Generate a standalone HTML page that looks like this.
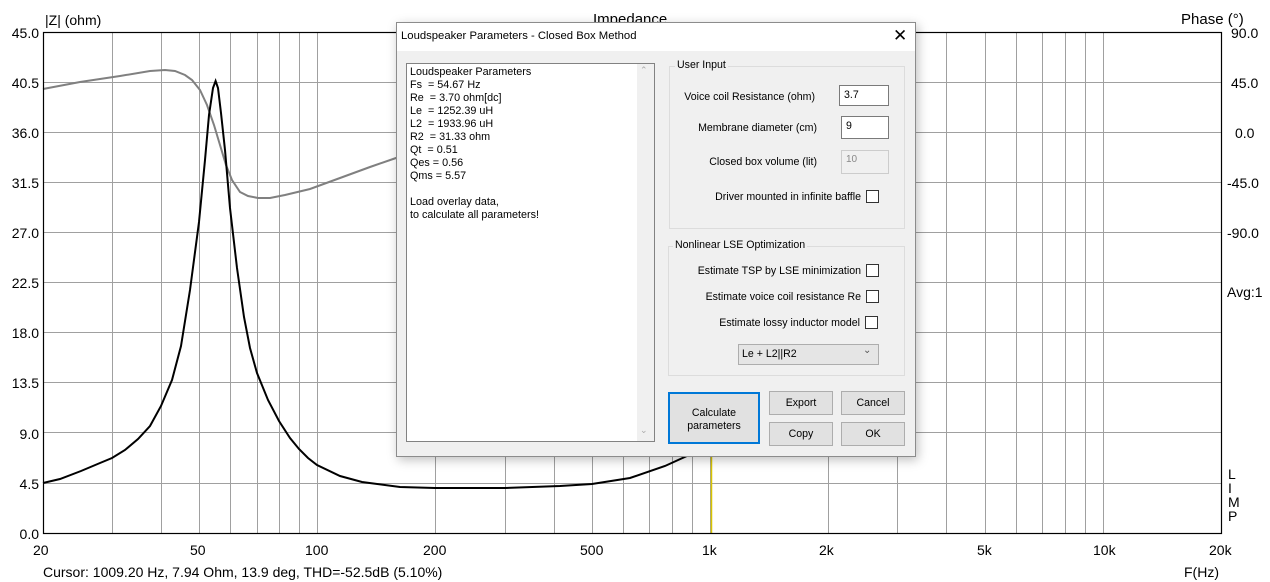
<!DOCTYPE html>
<html><head><meta charset="utf-8"><style>
*{margin:0;padding:0;box-sizing:border-box}
body{width:1270px;height:582px;background:#fff;position:relative;overflow:hidden;font-family:"Liberation Sans",Arial,sans-serif}
.a{position:absolute;font-size:14px;color:#000;white-space:nowrap;line-height:16px}
.dlg{position:absolute;left:396px;top:22px;width:520px;height:435px;background:#f0f0f0;border:1px solid #8c8c8c;box-shadow:2px 3px 10px rgba(0,0,0,.25);font-family:"Liberation Sans",sans-serif;font-size:10.6px}
.d{position:absolute;white-space:nowrap;font-size:10.6px}
.r{position:absolute;white-space:nowrap;font-size:10.6px;text-align:right}
.tb{position:absolute;left:0;top:0;width:518px;height:28px;background:#fff}
.inp{position:absolute;background:#fff;border:1px solid #7a7a7a;padding:3px 0 0 4px}
.cb{position:absolute;width:13px;height:13px;border:1px solid #333;background:#fff}
.grp{position:absolute;border:1px solid #dcdcdc}
.btn{position:absolute;background:#e1e1e1;border:1px solid #adadad;text-align:center}
</style></head><body>
<svg width="1270" height="582" style="position:absolute;left:0;top:0">
<g stroke="#a0a0a0" stroke-width="1">
<line x1="43" x2="1221" y1="82.5" y2="82.5"/><line x1="43" x2="1221" y1="132.5" y2="132.5"/><line x1="43" x2="1221" y1="182.5" y2="182.5"/><line x1="43" x2="1221" y1="232.5" y2="232.5"/><line x1="43" x2="1221" y1="282.5" y2="282.5"/><line x1="43" x2="1221" y1="332.5" y2="332.5"/><line x1="43" x2="1221" y1="382.5" y2="382.5"/><line x1="43" x2="1221" y1="432.5" y2="432.5"/><line x1="43" x2="1221" y1="483.5" y2="483.5"/>
<line x1="112.5" x2="112.5" y1="32" y2="533"/><line x1="161.5" x2="161.5" y1="32" y2="533"/><line x1="199.5" x2="199.5" y1="32" y2="533"/><line x1="230.5" x2="230.5" y1="32" y2="533"/><line x1="257.5" x2="257.5" y1="32" y2="533"/><line x1="279.5" x2="279.5" y1="32" y2="533"/><line x1="299.5" x2="299.5" y1="32" y2="533"/><line x1="317.5" x2="317.5" y1="32" y2="533"/>
<line x1="435.5" x2="435.5" y1="32" y2="533"/><line x1="505.5" x2="505.5" y1="32" y2="533"/><line x1="554.5" x2="554.5" y1="32" y2="533"/><line x1="592.5" x2="592.5" y1="32" y2="533"/><line x1="623.5" x2="623.5" y1="32" y2="533"/><line x1="649.5" x2="649.5" y1="32" y2="533"/><line x1="672.5" x2="672.5" y1="32" y2="533"/><line x1="692.5" x2="692.5" y1="32" y2="533"/><line x1="710.5" x2="710.5" y1="32" y2="533"/>
<line x1="828.5" x2="828.5" y1="32" y2="533"/><line x1="897.5" x2="897.5" y1="32" y2="533"/><line x1="946.5" x2="946.5" y1="32" y2="533"/><line x1="985.5" x2="985.5" y1="32" y2="533"/><line x1="1016.5" x2="1016.5" y1="32" y2="533"/><line x1="1042.5" x2="1042.5" y1="32" y2="533"/><line x1="1065.5" x2="1065.5" y1="32" y2="533"/><line x1="1085.5" x2="1085.5" y1="32" y2="533"/><line x1="1103.5" x2="1103.5" y1="32" y2="533"/>
</g>
<line x1="711.5" x2="711.5" y1="32" y2="533" stroke="#d8c400" stroke-width="1.5"/>
<polyline fill="none" stroke="#808080" stroke-width="2" points="43,89 80,82 120,76 150,71 165,70 175,71 185,75 192,80 200,90 207,105 214,125 220,145 226,165 232,180 240,192 248,196 258,198 270,198 285,195 310,189 340,178 370,167 396,158 450,140 520,120 600,100 700,80 800,60 900,45"/>
<polyline fill="none" stroke="#000" stroke-width="2" points="43,483 60,479 81,471 100,463 112,458 125,450 138,439 150,426 161,406 172,380 181,346 190,290 199,222 205,160 209,115 213,88 215.6,81 218,88 221,113 225,150 230,208 237,268 244,317 250,348 257,373 268,400 279,421 290,438 299,449 308,458 317,465 340,476 362,482 400,487 435,488 505,488 560,486 592,484 630,478 665,466 700,450 740,420 800,380 900,330"/>
<rect x="43.5" y="32.5" width="1178" height="501" fill="none" stroke="#000" stroke-width="1.2"/>
</svg>
<div class="a" style="left:45px;top:12px">|Z| (ohm)</div>
<div class="a" style="left:593px;top:12px;font-size:15px">Impedance</div>
<div class="a" style="left:1181px;top:12px;font-size:15px">Phase (°)</div>
<div class="a" style="left:4px;top:25px;width:35px;text-align:right">45.0</div>
<div class="a" style="left:4px;top:75px;width:35px;text-align:right">40.5</div>
<div class="a" style="left:4px;top:125px;width:35px;text-align:right">36.0</div>
<div class="a" style="left:4px;top:175px;width:35px;text-align:right">31.5</div>
<div class="a" style="left:4px;top:225px;width:35px;text-align:right">27.0</div>
<div class="a" style="left:4px;top:275px;width:35px;text-align:right">22.5</div>
<div class="a" style="left:4px;top:325px;width:35px;text-align:right">18.0</div>
<div class="a" style="left:4px;top:375px;width:35px;text-align:right">13.5</div>
<div class="a" style="left:4px;top:426px;width:35px;text-align:right">9.0</div>
<div class="a" style="left:4px;top:476px;width:35px;text-align:right">4.5</div>
<div class="a" style="left:4px;top:526px;width:35px;text-align:right">0.0</div>
<div class="a" style="left:1231px;top:25px">90.0</div>
<div class="a" style="left:1231px;top:75px">45.0</div>
<div class="a" style="left:1235px;top:125px">0.0</div>
<div class="a" style="left:1227px;top:175px">-45.0</div>
<div class="a" style="left:1227px;top:225px">-90.0</div>
<div class="a" style="left:1227px;top:284px">Avg:1</div>
<div class="a" style="left:1228px;top:467px;line-height:14px">L<br>I<br>M<br>P</div>
<div class="a" style="left:33px;top:542px">20</div>
<div class="a" style="left:190px;top:542px">50</div>
<div class="a" style="left:305px;top:542px">100</div>
<div class="a" style="left:423px;top:542px">200</div>
<div class="a" style="left:580px;top:542px">500</div>
<div class="a" style="left:702px;top:542px">1k</div>
<div class="a" style="left:819px;top:542px">2k</div>
<div class="a" style="left:977px;top:542px">5k</div>
<div class="a" style="left:1093px;top:542px">10k</div>
<div class="a" style="left:1209px;top:542px">20k</div>
<div class="a" style="left:43px;top:564px">Cursor: 1009.20 Hz, 7.94 Ohm, 13.9 deg, THD=-52.5dB (5.10%)</div>
<div class="a" style="left:1184px;top:564px">F(Hz)</div>

<div class="dlg">
<div class="tb"></div>
<div class="d" style="left:4px;top:7px;font-size:11.3px">Loudspeaker Parameters - Closed Box Method</div>
<div class="d" style="left:496px;top:3px;font-size:17px;font-weight:300">✕</div>
<div style="position:absolute;left:9px;top:40px;width:249px;height:379px;background:#fff;border:1px solid #828282"></div>
<div style="position:absolute;left:240px;top:41px;width:17px;height:377px;background:#f0f0f0"></div>
<div class="d" style="left:243px;top:42px;color:#aaa;font-size:9px">⌃</div>
<div class="d" style="left:243px;top:402px;color:#aaa;font-size:9px">⌄</div>
<div class="d" style="left:13px;top:43px;line-height:13px;font-size:10.8px">Loudspeaker Parameters<br>Fs &nbsp;= 54.67 Hz<br>Re &nbsp;= 3.70 ohm[dc]<br>Le &nbsp;= 1252.39 uH<br>L2 &nbsp;= 1933.96 uH<br>R2 &nbsp;= 31.33 ohm<br>Qt &nbsp;= 0.51<br>Qes = 0.56<br>Qms = 5.57<br><br>Load overlay data,<br>to calculate all parameters!</div>
<div class="grp" style="left:272px;top:43px;width:236px;height:163px"></div>
<div class="d" style="left:278px;top:36px;background:#f0f0f0;padding:0 2px">User Input</div>
<div class="r" style="right:100px;top:68px">Voice coil Resistance (ohm)</div>
<div class="inp" style="left:442px;top:62px;width:50px;height:21px">3.7</div>
<div class="r" style="right:98px;top:99px">Membrane diameter (cm)</div>
<div class="inp" style="left:444px;top:93px;width:48px;height:23px">9</div>
<div class="r" style="right:98px;top:133px">Closed box volume (lit)</div>
<div class="inp" style="left:444px;top:127px;width:48px;height:24px;border-color:#ccc;background:#f0f0f0;color:#888;font-size:10px">10</div>
<div class="r" style="right:54px;top:168px">Driver mounted in infinite baffle</div>
<div class="cb" style="left:469px;top:167px"></div>
<div class="grp" style="left:271px;top:223px;width:237px;height:130px"></div>
<div class="d" style="left:276px;top:216px;background:#f0f0f0;padding:0 2px">Nonlinear LSE Optimization</div>
<div class="r" style="right:54px;top:242px">Estimate TSP by LSE minimization</div>
<div class="cb" style="left:469px;top:241px"></div>
<div class="r" style="right:54px;top:268px">Estimate voice coil resistance Re</div>
<div class="cb" style="left:469px;top:267px"></div>
<div class="r" style="right:55px;top:294px">Estimate lossy inductor model</div>
<div class="cb" style="left:468px;top:293px"></div>
<div style="position:absolute;left:341px;top:321px;width:141px;height:21px;background:#e5e5e5;border:1px solid #adadad"></div>
<div class="d" style="left:345px;top:325px">Le + L2||R2</div>
<div class="d" style="left:466px;top:322px;font-size:10px;color:#555">⌄</div>
<div class="btn" style="left:271px;top:369px;width:92px;height:52px;border:2px solid #0078d7;padding-top:13px;line-height:13px">Calculate<br>parameters</div>
<div class="btn" style="left:372px;top:368px;width:64px;height:24px;padding-top:5px">Export</div>
<div class="btn" style="left:444px;top:368px;width:64px;height:24px;padding-top:5px">Cancel</div>
<div class="btn" style="left:372px;top:399px;width:64px;height:24px;padding-top:5px">Copy</div>
<div class="btn" style="left:444px;top:399px;width:64px;height:24px;padding-top:5px">OK</div>
</div>
</body></html>
